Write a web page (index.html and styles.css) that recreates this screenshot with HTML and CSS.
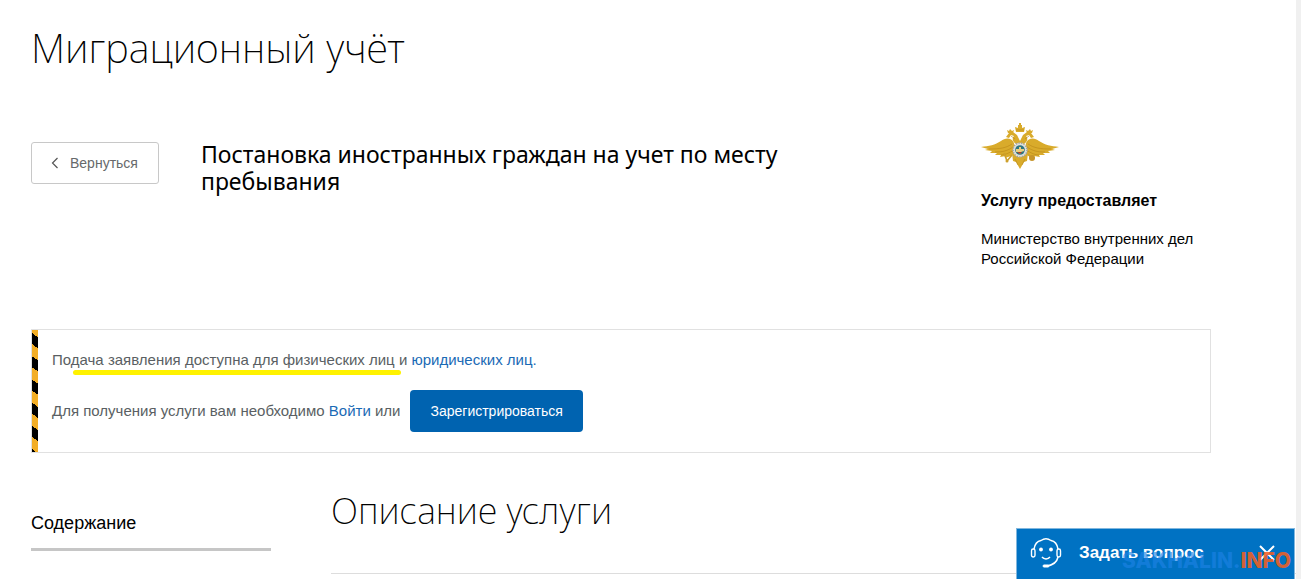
FILE: index.html
```html
<!DOCTYPE html>
<html lang="ru">
<head>
  <meta charset="UTF-8" />
  <meta name="viewport" content="width=device-width, initial-scale=1.0"/>
  <title>Миграционный учёт</title>
  <link rel="stylesheet" href="styles.css">
</head>
<body>
  <main class="page">
    <h1 class="page-title">Миграционный учёт</h1>

    <section class="service">
      <button type="button" class="btn-back">
        <svg width="8" height="12" viewBox="0 0 8 12" aria-hidden="true"><path d="M6.5 1 1.500 6l5 5" fill="none" stroke="#555" stroke-width="1.200"/></svg>
        Вернуться
      </button>
      <h2 class="service-title">Постановка иностранных граждан на учет по месту пребывания</h2>
      <aside class="provider">
        <svg class="emblem" width="78" height="46" viewBox="0 0 78 46" aria-hidden="true">
          <!-- wings -->
          <g fill="#d9ab2b">
            <path d="M33 20C30 14 24 15 20 18C14 22 8 23 0 24L7 26L4 27L11 28L9 30L16 30L14 32L20 32L19 34L25 33L24 35L30 33L35 31Z"/>
            <path d="M45 20C48 14 54 15 58 18C64 22 70 23 78 24L71 26L74 27L67 28L69 30L62 30L64 32L58 32L59 34L53 33L54 35L48 33L43 31Z"/>
            <path d="M31 30 32 38 35 39 39 46 43 39 46 38 47 30Z"/>
            <!-- heads and crowns -->
            <path d="M35 21C31 18 31 15 33 13L30 12 28 15 25 14 28 10 32 9 36 12 39 18 42 12 46 9 50 10 53 14 50 15 48 12 45 13C47 15 47 18 43 21Z"/>
            <path d="M26 7 28 8 29 6 31 8 33 7 32 10 27 10ZM45 7 47 8 49 6 50 8 52 7 51 10 46 10Z"/>
            <path d="M34 4 37 5 37 2 38 2 38 0 40 0 40 2 41 2 41 5 44 4 43 9 35 9Z"/>
          </g>
          <g fill="none" stroke="#b98717" stroke-width=".6">
            <path d="M31 21C25 25 19 26 8 26M32 24C26 28 22 29 14 29M33 27C28 30 24 32 20 32M47 21C53 25 59 26 70 26M46 24C52 28 56 29 64 29M45 27C50 30 54 32 58 32M34 36 37 42M44 36 41 42"/>
            <path d="M35 7h8M30 13l4 3M48 13l-4 3"/>
          </g>
          <path d="M31 32 26 38M23 30 26 38" stroke="#cda02c" stroke-width="1.600"/>
          <path d="M47 31 51 36" stroke="#cda02c" stroke-width="1.400"/>
          <circle cx="26" cy="38" r="1.500" fill="#cda02c"/>
          <circle cx="51" cy="35" r="3" fill="#c6952a"/>
          <circle cx="39" cy="27" r="7.200" fill="#dfe0dc"/>
          <circle cx="39" cy="27" r="7" fill="none" stroke="#a6a49b" stroke-width="1.600" stroke-dasharray="1.3 1.3"/>
          <circle cx="39" cy="27" r="4.800" fill="#2f7680"/>
          <path d="M35 26h3v-2h2v2h3v2l-3 1-1 2-2-2-2 0Z" fill="#e9cf80"/>
          <path d="M36 29h5l-2 2Z" fill="#b83c25"/>
        </svg>
        <h3 class="provider-title">Услугу предоставляет</h3>
        <p class="provider-name">Министерство внутренних дел Российской Федерации</p>
      </aside>
    </section>

    <section class="notice">
      <p class="notice-line">П<span class="marked">одача заявления доступна для физических лиц</span> и <a href="#legal">юридических лиц.</a></p>
      <div class="notice-line notice-login">
        <span>Для получения услуги вам необходимо <a href="#login">Войти</a> или</span>
        <button type="button" class="btn-register">Зарегистрироваться</button>
      </div>
    </section>

    <section class="details">
      <nav class="contents">Содержание</nav>
      <h2 class="details-title">Описание услуги</h2>
    </section>
  </main>

  <div class="chat">
    <svg width="32" height="32" viewBox="0 0 32 32" fill="none" stroke="#fff" aria-hidden="true">
      <path d="M4 12C5 6 8 4 11 3.500C14 1.500 18 1.500 21 3.500C24 4 27 6 28 12" stroke-width="1.500"/>
      <path d="M28 20C27 25 23 28 17 29" stroke-width="1.500"/>
      <rect x="1.500" y="12" width="3.500" height="8" rx="1.700" stroke-width="1.400"/>
      <rect x="27" y="12" width="3.500" height="8" rx="1.700" stroke-width="1.400"/>
      <rect x="13" y="28" width="6" height="2" rx="1" fill="#fff"/>
      <path d="M12 20C14 22.500 18 22.500 20 20" stroke-width="1.500"/>
      <circle cx="11" cy="12.500" r="1.900" fill="#fff" stroke="none"/>
      <circle cx="21" cy="12.500" r="1.900" fill="#fff" stroke="none"/>
    </svg>
    <button type="button" class="chat-open">Задать вопрос</button>
    <button type="button" class="chat-close" aria-label="Закрыть">
      <svg width="16" height="16" viewBox="0 0 16 16" aria-hidden="true"><path d="M1 1l14 14M15 1 1 15" stroke="#fff" stroke-width="2"/></svg>
    </button>
    <div class="watermark">SAKHALIN.<span>INFO</span></div>
  </div>
</body>
</html>
```
FILE: styles.css
```css
* {
  box-sizing: border-box;
}

body {
  font-family: "Liberation Sans", Arial, sans-serif;
  font-size: 15px;
  line-height: 20px;
  color: #000;
  background-color: #fff;
  margin: 0;
  min-height: 100vh;
  border-right: 5px solid #f0f0f0;
  overflow: hidden;
}

h1, h2, h3, p {
  margin: 0;
}

button {
  font-family: inherit;
  cursor: pointer;
}

svg {
  flex-shrink: 0;
}

a {
  color: #1a6ab5;
  text-decoration: none;
}

.page {
  padding: 24px 0 0 31px;
}

.page-title,
.details-title {
  font-family: "Noto Sans", "Open Sans", sans-serif;
  font-size: 40px;
  line-height: 48px;
  font-weight: 200;
}

.service {
  display: flex;
  align-items: flex-start;
  margin: 51px 85px 55px 0;
}

.btn-back {
  display: flex;
  align-items: center;
  gap: 11px;
  height: 42px;
  margin-top: 19px;
  padding: 0 20px 0 19px;
  font-size: 14px;
  color: #66696b;
  background-color: #fff;
  border: 1px solid #c8c8c8;
  border-radius: 3px;
}

.service-title {
  flex: 1;
  max-width: 620px;
  margin: 18px 0 0 42px;
  font-family: "Noto Sans", "Open Sans", sans-serif;
  font-size: 23px;
  line-height: 27px;
  font-weight: 400;
}

.provider {
  width: 230px;
  margin-left: auto;
}

.emblem {
  display: block;
}

.provider-title {
  margin-top: 22px;
  font-size: 16px;
  line-height: 20px;
}

.provider-name {
  margin-top: 18px;
  padding-bottom: 5px;
}

.notice {
  position: relative;
  margin-right: 85px;
  padding: 20px;
  color: #5a5f63;
  border: 1px solid #e1e1e1;
}

/* warning tape on the left edge */
.notice::before {
  content: "";
  position: absolute;
  left: 0;
  top: 0;
  bottom: 0;
  width: 6px;
  background: repeating-linear-gradient(215deg, #f3ae26 0 6px, #000 6px 15px, #f3ae26 15px 19px);
}

.notice-login {
  display: flex;
  align-items: center;
  gap: 10px;
  margin-top: 20px;
}

.marked {
  position: relative;
}

.marked::after {
  content: "";
  position: absolute;
  left: 10px;
  right: -6px;
  bottom: -7px;
  height: 5px;
  border-radius: 3px;
  background-color: #fff200;
}

.btn-register {
  height: 42px;
  padding: 0 20px;
  font-size: 14px;
  color: #fff;
  background-color: #0063b0;
  border: 0;
  border-radius: 4px;
}

.details {
  display: grid;
  grid-template-columns: 240px 1fr;
  gap: 60px;
  align-items: start;
  margin-top: 34px;
}

.contents {
  padding: 26px 0 15px;
  font-size: 18px;
  line-height: 20px;
  border-bottom: 3px solid #c6c6c6;
}

.details-title {
  padding-bottom: 38px;
  font-size: 36px;
  border-bottom: 1px solid #ddd;
}

.chat {
  position: fixed;
  right: 6px;
  bottom: 0;
  display: flex;
  align-items: center;
  width: 279px;
  height: 51px;
  padding: 0 19px 2px 13px;
  background-color: #0072c3;
  border: 1px solid #81b7de;
  border-bottom: 0;
}

.chat-open,
.chat-close {
  padding: 0;
  color: #fff;
  background: none;
  border: 0;
}

.chat-open {
  margin-left: 17px;
  font-size: 17px;
  font-weight: 700;
}

.chat-close {
  display: flex;
  margin-left: auto;
}

.watermark {
  position: absolute;
  right: 3px;
  bottom: 6px;
  font-family: Inter, sans-serif;
  font-size: 21px;
  line-height: 24px;
  font-weight: 800;
  color: rgba(30, 130, 230, 0.65);
  pointer-events: none;
}

.watermark span {
  color: rgba(240, 95, 35, 0.9);
}
```
